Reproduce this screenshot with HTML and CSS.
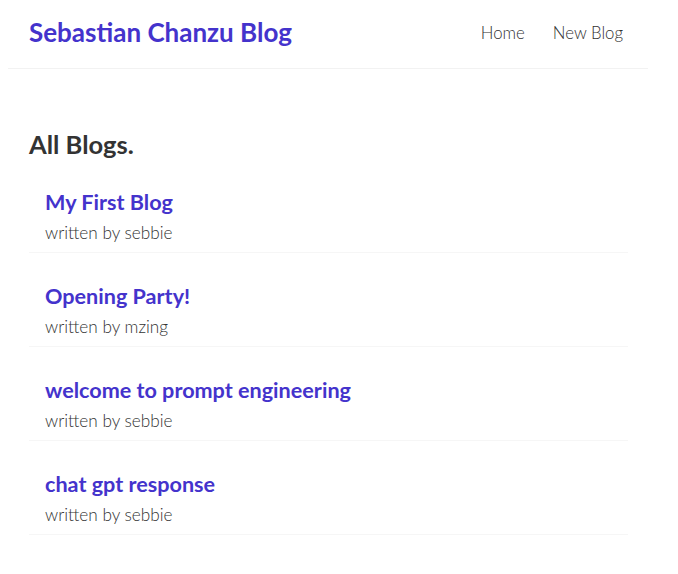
FILE: index.html
```html
<!DOCTYPE html>
<html>
<head>
<meta charset="utf-8">
<link rel="stylesheet" href="styles.css">
</head>
<body>
<nav class="navbar">
  <h1 class="brand">Sebastian Chanzu Blog</h1>
  <div class="links">
    <a href="#">Home</a>
    <a href="#">New Blog</a>
  </div>
</nav>
<main class="content">
  <h2 class="page-title">All Blogs.</h2>
  <div class="blog-preview">
    <h2 class="blog-title">My First Blog</h2>
    <p class="author">written by sebbie</p>
  </div>
  <div class="blog-preview">
    <h2 class="blog-title">Opening Party!</h2>
    <p class="author">written by mzing</p>
  </div>
  <div class="blog-preview">
    <h2 class="blog-title">welcome to prompt engineering</h2>
    <p class="author">written by sebbie</p>
  </div>
  <div class="blog-preview">
    <h2 class="blog-title">chat gpt response</h2>
    <p class="author">written by sebbie</p>
  </div>
</main>
</body>
</html>
```

FILE: styles.css
```css
* {
  margin: 0;
  font-family: "Lato", "Open Sans", sans-serif;
  color: #333;
}
body {
  margin: 8px;
  background: #fff;
}
.navbar {
  width: 599px;
  height: 48px;
  padding: 0 20px 12px 21px;
  display: flex;
  align-items: center;
  border-bottom: 1px solid #f2f2f2;
}
.brand {
  font-size: 26px;
  font-weight: 700;
  color: #4433cc;
}
.links {
  margin-left: auto;
  display: flex;
  gap: 28px;
  padding-right: 5px;
}
.links a {
  text-decoration: none;
  font-size: 16.8px;
  font-weight: 300;
  color: #333;
}
.content {
  width: 599px;
  margin-top: 40px;
  padding: 20px 20px 20px 21px;
}
.page-title {
  font-size: 25.5px;
  font-weight: 700;
  line-height: 30px;
}
.blog-preview {
  padding: 10px 16px;
  margin: 20px 0;
  border-bottom: 1px solid #f6f6f6;
}
.blog-title {
  font-size: 21.6px;
  line-height: 26px;
  font-weight: 700;
  color: #4433cc;
  margin-bottom: 8px;
}
.author {
  font-size: 17.2px;
  line-height: 19px;
  font-weight: 300;
  color: #333;
}
```
